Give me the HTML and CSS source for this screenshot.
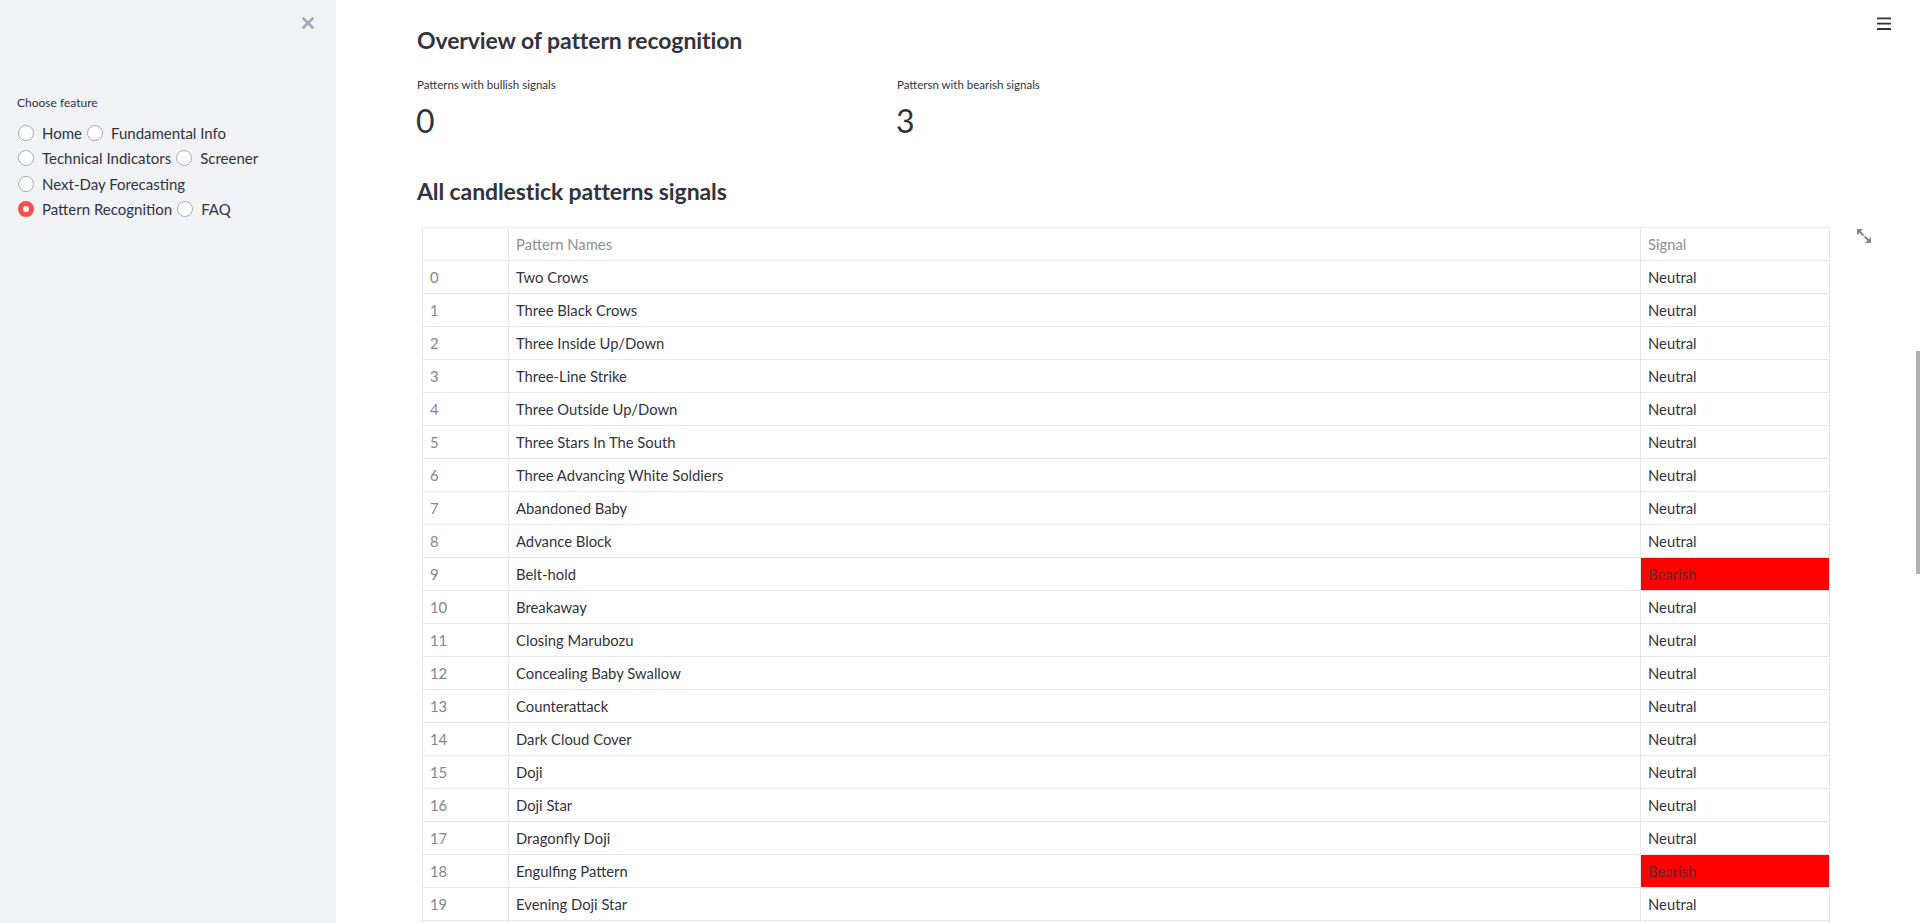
FILE: index.html
```html
<!DOCTYPE html>
<html lang="en">
<head>
<meta charset="utf-8">
<title>Pattern Recognition</title>
<link rel="stylesheet" href="styles.css">
</head>
<body>
<div class="app">
  <aside class="sidebar">
    <svg class="close" viewBox="0 0 12 12" width="12" height="12"><path d="M1.5 1.5 L10.5 10.5 M10.5 1.5 L1.5 10.5" stroke="#a3a8b4" stroke-width="2.6" stroke-linecap="round"/></svg>
    <div class="sidebar-content">
      <div class="widget-label">Choose feature</div>
      <div class="radio-group">
        <div class="radio-row">
          <label class="radio"><span class="dot"></span><span class="rlabel">Home</span></label>
          <label class="radio"><span class="dot"></span><span class="rlabel">Fundamental Info</span></label>
        </div>
        <div class="radio-row">
          <label class="radio"><span class="dot"></span><span class="rlabel">Technical Indicators</span></label>
          <label class="radio"><span class="dot"></span><span class="rlabel">Screener</span></label>
        </div>
        <div class="radio-row">
          <label class="radio"><span class="dot"></span><span class="rlabel">Next-Day Forecasting</span></label>
        </div>
        <div class="radio-row">
          <label class="radio"><span class="dot checked"></span><span class="rlabel">Pattern Recognition</span></label>
          <label class="radio"><span class="dot"></span><span class="rlabel">FAQ</span></label>
        </div>
      </div>
    </div>
  </aside>
  <main class="main">
    <svg class="menu" viewBox="0 0 14 14" width="14" height="14"><path d="M0 1.3 H14 M0 6.7 H14 M0 12 H14" stroke="#31333f" stroke-width="1.8"/></svg>
    <h2 class="title">Overview of pattern recognition</h2>
    <div class="metrics">
      <div class="metric">
        <div class="metric-label">Patterns with bullish signals</div>
        <div class="metric-value">0</div>
      </div>
      <div class="metric">
        <div class="metric-label">Pattersn with bearish signals</div>
        <div class="metric-value">3</div>
      </div>
      <div class="metric"></div>
    </div>
    <h2 class="title subtitle">All candlestick patterns signals</h2>
    <div class="frame">
      <svg class="expand" viewBox="0 0 14 14" width="14" height="14"><path d="M0 0 H6 L0 6 Z M14 14 H8 L14 8 Z" fill="#808495"/><path d="M2 2 L6.5 6.5 M12 12 L7.5 7.5" stroke="#808495" stroke-width="2"/></svg>
      <table class="grid">
        <colgroup><col class="c-idx"><col class="c-name"><col class="c-sig"></colgroup>
        <thead>
          <tr><th></th><th>Pattern Names</th><th>Signal</th></tr>
        </thead>
        <tbody>
          <tr><td class="idx">0</td><td>Two Crows</td><td>Neutral</td></tr>
          <tr><td class="idx">1</td><td>Three Black Crows</td><td>Neutral</td></tr>
          <tr><td class="idx">2</td><td>Three Inside Up/Down</td><td>Neutral</td></tr>
          <tr><td class="idx">3</td><td>Three-Line Strike</td><td>Neutral</td></tr>
          <tr><td class="idx">4</td><td>Three Outside Up/Down</td><td>Neutral</td></tr>
          <tr><td class="idx">5</td><td>Three Stars In The South</td><td>Neutral</td></tr>
          <tr><td class="idx">6</td><td>Three Advancing White Soldiers</td><td>Neutral</td></tr>
          <tr><td class="idx">7</td><td>Abandoned Baby</td><td>Neutral</td></tr>
          <tr><td class="idx">8</td><td>Advance Block</td><td>Neutral</td></tr>
          <tr><td class="idx">9</td><td>Belt-hold</td><td class="bearish">Bearish</td></tr>
          <tr><td class="idx">10</td><td>Breakaway</td><td>Neutral</td></tr>
          <tr><td class="idx">11</td><td>Closing Marubozu</td><td>Neutral</td></tr>
          <tr><td class="idx">12</td><td>Concealing Baby Swallow</td><td>Neutral</td></tr>
          <tr><td class="idx">13</td><td>Counterattack</td><td>Neutral</td></tr>
          <tr><td class="idx">14</td><td>Dark Cloud Cover</td><td>Neutral</td></tr>
          <tr><td class="idx">15</td><td>Doji</td><td>Neutral</td></tr>
          <tr><td class="idx">16</td><td>Doji Star</td><td>Neutral</td></tr>
          <tr><td class="idx">17</td><td>Dragonfly Doji</td><td>Neutral</td></tr>
          <tr><td class="idx">18</td><td>Engulfing Pattern</td><td class="bearish">Bearish</td></tr>
          <tr><td class="idx">19</td><td>Evening Doji Star</td><td>Neutral</td></tr>
          <tr class="clip"><td class="idx"></td><td></td><td></td></tr>
        </tbody>
      </table>
    </div>
    <div class="scroll-thumb"></div>
  </main>
</div>
</body>
</html>
```
FILE: styles.css
```css
html, body {
  margin: 0;
  padding: 0;
  background: #ffffff;
}
body {
  font-family: Lato, "Noto Sans", sans-serif;
  color: #31333f;
}
.app {
  display: flex;
  height: 923px;
  overflow: hidden;
}
.sidebar {
  position: relative;
  flex: none;
  width: 336px;
  box-sizing: border-box;
  background: #f0f2f6;
  padding: 0 16px 0 17px;
}
.close {
  position: absolute;
  left: 302px;
  top: 17px;
}
.sidebar-content {
  padding-top: 94px;
}
.widget-label {
  font-size: 12px;
  line-height: 18px;
  height: 18px;
}
.radio-group {
  margin-top: 8px;
}
.radio-row {
  display: flex;
  height: 25.5px;
  align-items: center;
}
.radio {
  display: flex;
  align-items: center;
  gap: 8px;
  margin-right: 4px;
  font-size: 15px;
}
.dot {
  box-sizing: border-box;
  width: 16px;
  height: 16px;
  border-radius: 50%;
  border: 1.5px solid #a9adb6;
  background: #ffffff;
  margin-left: 1px;
}
.dot.checked {
  border: 5px solid #ff4b4b;
  background: #ffffff;
}
.main {
  position: relative;
  flex: 1;
  padding: 20px 80px 0 81px;
  overflow: hidden;
}
.menu {
  position: absolute;
  left: 1541px;
  top: 17px;
}
.title {
  margin: 0;
  font-size: 23px;
  line-height: 40px;
  font-weight: 700;
  letter-spacing: -0.1px;
}
.metrics {
  display: grid;
  grid-template-columns: repeat(3, 1fr);
  gap: 16px;
  margin-top: 17px;
  margin-left: -1px;
}
.metric-label {
  font-size: 11.5px;
  line-height: 16px;
  padding-left: 1px;
}
.metric-value {
  margin-top: 8px;
  font-size: 32px;
  line-height: 40px;
  font-weight: 400;
}
.subtitle {
  margin-top: 30px;
}
.frame {
  position: relative;
  margin-top: 16px;
  margin-left: 5px;
  width: 1408px;
}
.expand {
  position: absolute;
  left: 1435px;
  top: 2px;
}
.grid {
  width: 1408px;
  border-collapse: collapse;
  table-layout: fixed;
  font-size: 14.8px;
}
.c-idx { width: 86px; }
.c-sig { width: 189px; }
.grid th, .grid td {
  border: 1px solid #e6e6ea;
  height: 32px;
  padding: 0 0 0 7px;
  text-align: left;
  font-weight: 400;
  white-space: nowrap;
  overflow: hidden;
}
.grid th {
  color: #8b8d96;
}
.grid td.idx {
  color: #83858e;
}
.grid td.bearish {
  background: #ff0000;
  color: rgba(49, 51, 63, 0.8);
}
.scroll-thumb {
  position: absolute;
  right: 0;
  top: 351px;
  width: 4px;
  height: 223px;
  background: #b0b0b5;
}
```
